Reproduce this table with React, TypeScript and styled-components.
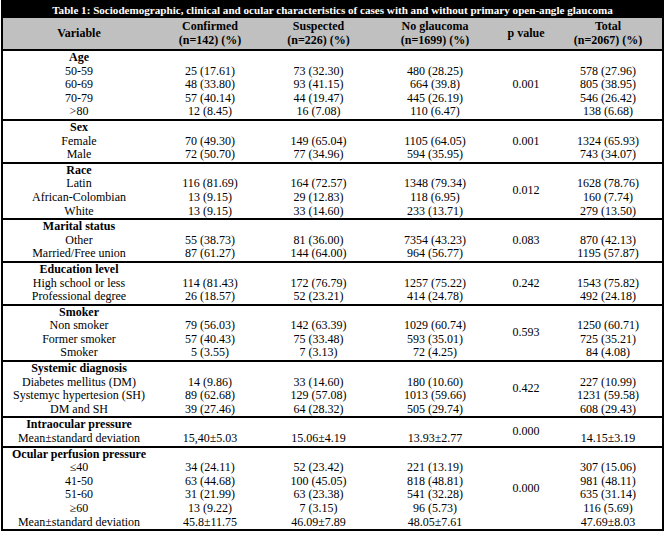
import React from "react";
import styled, { createGlobalStyle } from "styled-components";

const Global = createGlobalStyle`
  html, body { margin: 0; padding: 0; background: #fff; }
`;

const Page = styled.div`
  padding: 0 2px 1px 1px;
`;

const Table = styled.table`
  width: 663px;
  table-layout: fixed;
  border-collapse: separate;
  border-spacing: 0;
  border: 2px solid #000;
  font-family: "Liberation Serif", "Times New Roman", serif;
  font-size: 12px;
  color: #000;
`;

const TitleCell = styled.th`
  background: #000;
  color: #fff;
  font-weight: bold;
  font-size: 11.1px;
  line-height: 16px;
  padding: 0;
  text-align: center;
  white-space: nowrap;
`;

const HeadCell = styled.th`
  background: #c0c0c0;
  font-weight: bold;
  line-height: 14px;
  padding: 1px 0 2px;
  text-align: center;
  vertical-align: middle;
  border-bottom: 2px solid #000;
`;

const Cell = styled.td<{ $first?: boolean; $bold?: boolean }>`
  padding: 0;
  line-height: 13.6px;
  height: 13.6px;
  text-align: center;
  vertical-align: middle;
  white-space: nowrap;
  font-weight: ${(p) => (p.$bold ? "bold" : "normal")};
  border-top: ${(p) => (p.$first ? "2px solid #000" : "0")};
`;

type Section = { label: string; p: string; rows: string[][] };

const sections: Section[] = [
  {
    label: "Age",
    p: "0.001",
    rows: [
      ["50-59", "25 (17.61)", "73 (32.30)", "480 (28.25)", "578 (27.96)"],
      ["60-69", "48 (33.80)", "93 (41.15)", "664 (39.8)", "805 (38.95)"],
      ["70-79", "57 (40.14)", "44 (19.47)", "445 (26.19)", "546 (26.42)"],
      [">80", "12 (8.45)", "16 (7.08)", "110 (6.47)", "138 (6.68)"],
    ],
  },
  {
    label: "Sex",
    p: "0.001",
    rows: [
      ["Female", "70 (49.30)", "149 (65.04)", "1105 (64.05)", "1324 (65.93)"],
      ["Male", "72 (50.70)", "77 (34.96)", "594 (35.95)", "743 (34.07)"],
    ],
  },
  {
    label: "Race",
    p: "0.012",
    rows: [
      ["Latin", "116 (81.69)", "164 (72.57)", "1348 (79.34)", "1628 (78.76)"],
      ["African-Colombian", "13 (9.15)", "29 (12.83)", "118 (6.95)", "160 (7.74)"],
      ["White", "13 (9.15)", "33 (14.60)", "233 (13.71)", "279 (13.50)"],
    ],
  },
  {
    label: "Marital status",
    p: "0.083",
    rows: [
      ["Other", "55 (38.73)", "81 (36.00)", "7354 (43.23)", "870 (42.13)"],
      ["Married/Free union", "87 (61.27)", "144 (64.00)", "964 (56.77)", "1195 (57.87)"],
    ],
  },
  {
    label: "Education level",
    p: "0.242",
    rows: [
      ["High school or less", "114 (81.43)", "172 (76.79)", "1257 (75.22)", "1543 (75.82)"],
      ["Professional degree", "26 (18.57)", "52 (23.21)", "414 (24.78)", "492 (24.18)"],
    ],
  },
  {
    label: "Smoker",
    p: "0.593",
    rows: [
      ["Non smoker", "79 (56.03)", "142 (63.39)", "1029 (60.74)", "1250 (60.71)"],
      ["Former smoker", "57 (40.43)", "75 (33.48)", "593 (35.01)", "725 (35.21)"],
      ["Smoker", "5 (3.55)", "7 (3.13)", "72 (4.25)", "84 (4.08)"],
    ],
  },
  {
    label: "Systemic diagnosis",
    p: "0.422",
    rows: [
      ["Diabetes mellitus (DM)", "14 (9.86)", "33 (14.60)", "180 (10.60)", "227 (10.99)"],
      ["Systemyc hypertesion (SH)", "89 (62.68)", "129 (57.08)", "1013 (59.66)", "1231 (59.58)"],
      ["DM and SH", "39 (27.46)", "64 (28.32)", "505 (29.74)", "608 (29.43)"],
    ],
  },
  {
    label: "Intraocular pressure",
    p: "0.000",
    rows: [["Mean±standard deviation", "15,40±5.03", "15.06±4.19", "13.93±2.77", "14.15±3.19"]],
  },
  {
    label: "Ocular perfusion pressure",
    p: "0.000",
    rows: [
      ["≤40", "34 (24.11)", "52 (23.42)", "221 (13.19)", "307 (15.06)"],
      ["41-50", "63 (44.68)", "100 (45.05)", "818 (48.81)", "981 (48.11)"],
      ["51-60", "31 (21.99)", "63 (23.38)", "541 (32.28)", "635 (31.14)"],
      ["≥60", "13 (9.22)", "7 (3.15)", "96 (5.73)", "116 (5.69)"],
      ["Mean±standard deviation", "45.8±11.75", "46.09±7.89", "48.05±7.61", "47.69±8.03"],
    ],
  },
];

const widths = [152, 110, 107, 126, 56, 108];

function SectionBody({ s, index }: { s: Section; index: number }) {
  const first = index > 0;
  return (
    <tbody>
      <tr>
        <Cell $first={first} $bold>
          {s.label}
        </Cell>
        <Cell $first={first} />
        <Cell $first={first} />
        <Cell $first={first} />
        <Cell $first={first} rowSpan={s.rows.length + 1}>
          {s.p}
        </Cell>
        <Cell $first={first} />
      </tr>
      {s.rows.map((r, i) => (
        <tr key={i}>
          <Cell>{r[0]}</Cell>
          <Cell>{r[1]}</Cell>
          <Cell>{r[2]}</Cell>
          <Cell>{r[3]}</Cell>
          <Cell>{r[4]}</Cell>
        </tr>
      ))}
    </tbody>
  );
}

export default function App() {
  return (
    <Page>
      <Global />
      <Table>
        <colgroup>
          {widths.map((w, i) => (
            <col key={i} style={{ width: w }} />
          ))}
        </colgroup>
        <thead>
          <tr>
            <TitleCell colSpan={6}>
              Table 1: Sociodemographic, clinical and ocular characteristics of cases with and without primary
              open-angle glaucoma
            </TitleCell>
          </tr>
          <tr>
            <HeadCell>Variable</HeadCell>
            <HeadCell>
              Confirmed
              <br />
              (n=142) (%)
            </HeadCell>
            <HeadCell>
              Suspected
              <br />
              (n=226) (%)
            </HeadCell>
            <HeadCell>
              No glaucoma
              <br />
              (n=1699) (%)
            </HeadCell>
            <HeadCell>p value</HeadCell>
            <HeadCell>
              Total
              <br />
              (n=2067) (%)
            </HeadCell>
          </tr>
        </thead>
        {sections.map((s, i) => (
          <SectionBody key={s.label} s={s} index={i} />
        ))}
      </Table>
    </Page>
  );
}
